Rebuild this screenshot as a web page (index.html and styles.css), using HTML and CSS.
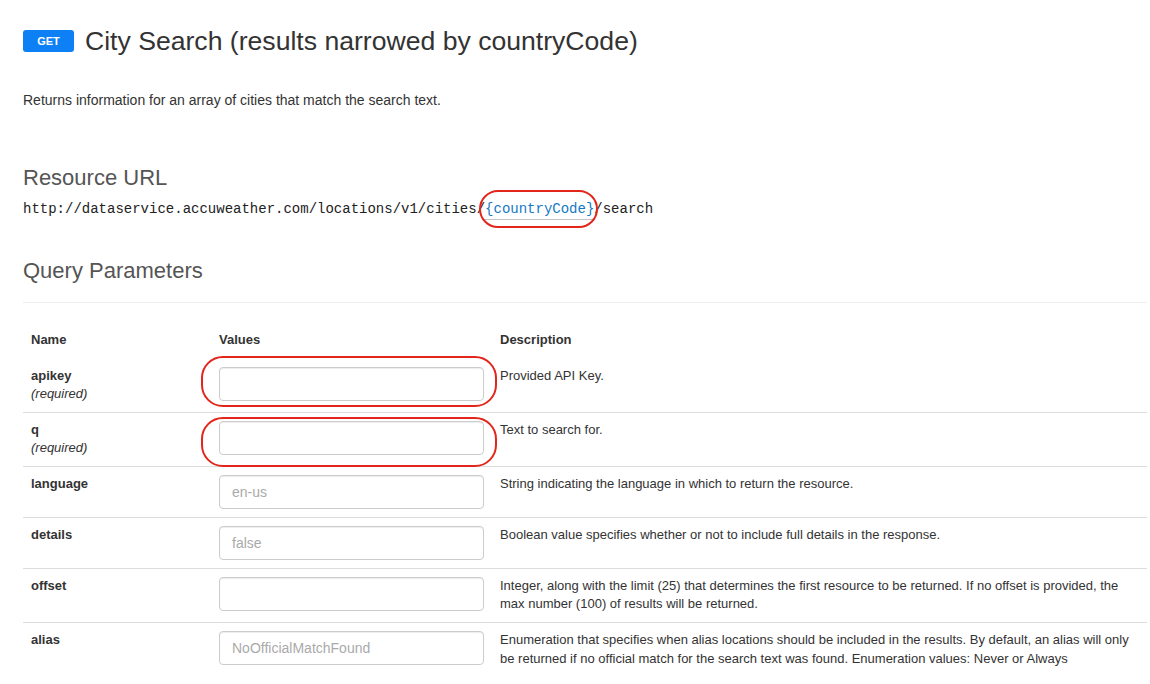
FILE: index.html
```html
<!DOCTYPE html>
<html lang="en">
<head>
<meta charset="utf-8">
<title>City Search</title>
<link rel="stylesheet" href="styles.css">
</head>
<body>
<div class="page">
  <div class="endpoint-head">
    <span class="method">GET</span>
    <h1 class="endpoint-title">City Search (results narrowed by countryCode)</h1>
  </div>
  <p class="endpoint-desc">Returns information for an array of cities that match the search text.</p>

  <h3 class="section-title">Resource URL</h3>
  <div class="resource-url">http://dataservice.accuweather.com/locations/v1/cities/<span class="url-param">{countryCode}<span class="mark mark-url"></span></span>/search</div>

  <h3 class="section-title section-title-query">Query Parameters</h3>
  <hr class="divider">

  <table class="params">
    <colgroup>
      <col class="col-name">
      <col class="col-value">
      <col class="col-desc">
    </colgroup>
    <thead>
      <tr><th>Name</th><th>Values</th><th>Description</th></tr>
    </thead>
    <tbody>
      <tr class="first-row">
        <td><div class="pname">apikey</div><div class="req">(required)</div></td>
        <td><div class="field"><input class="input" type="text"><span class="mark mark-a"></span></div></td>
        <td>Provided API Key.</td>
      </tr>
      <tr>
        <td><div class="pname">q</div><div class="req">(required)</div></td>
        <td><div class="field"><input class="input" type="text"><span class="mark mark-b"></span></div></td>
        <td>Text to search for.</td>
      </tr>
      <tr>
        <td><div class="pname">language</div></td>
        <td><div class="field"><input class="input" type="text" placeholder="en-us"></div></td>
        <td>String indicating the language in which to return the resource.</td>
      </tr>
      <tr>
        <td><div class="pname">details</div></td>
        <td><div class="field"><input class="input" type="text" placeholder="false"></div></td>
        <td>Boolean value specifies whether or not to include full details in the response.</td>
      </tr>
      <tr>
        <td><div class="pname">offset</div></td>
        <td><div class="field"><input class="input" type="text"></div></td>
        <td>Integer, along with the limit (25) that determines the first resource to be returned. If no offset is provided, the max number (100) of results will be returned.</td>
      </tr>
      <tr>
        <td><div class="pname">alias</div></td>
        <td><div class="field"><input class="input" type="text" placeholder="NoOfficialMatchFound"></div></td>
        <td>Enumeration that specifies when alias locations should be included in the results. By default, an alias will only be returned if no official match for the search text was found. Enumeration values: Never or Always</td>
      </tr>
    </tbody>
  </table>
</div>
</body>
</html>
```

FILE: styles.css
```css
html, body {
  margin: 0;
  padding: 0;
  background: #fff;
}
body {
  font-family: "Liberation Sans", Arial, Helvetica, sans-serif;
  font-size: 13px;
  line-height: 1.42857;
  color: #333;
}
.page {
  width: 1124px;
  padding: 23px 3px 0 23px;
}
.endpoint-head {
  display: flex;
  align-items: center;
  gap: 11px;
  height: 36px;
}
.method {
  display: inline-flex;
  align-items: center;
  justify-content: center;
  width: 51px;
  height: 22px;
  border-radius: 3px;
  background: #0c80f4;
  color: #fff;
  font-size: 11px;
  font-weight: bold;
  line-height: 1;
}
.endpoint-title {
  margin: 0;
  font-size: 26.6px;
  font-weight: normal;
  line-height: 36px;
  color: #333;
}
.endpoint-desc {
  margin: 31px 0 0;
  font-size: 14px;
  line-height: 20px;
}
.section-title {
  margin: 56px 0 0;
  font-size: 22px;
  font-weight: normal;
  line-height: 24px;
  color: #555;
}
.section-title-query {
  margin-top: 40px;
}
.resource-url {
  margin-top: 9px;
  font-family: "Liberation Mono", "Courier New", monospace;
  font-size: 14px;
  line-height: 20px;
  color: #222;
}
.url-param {
  position: relative;
  color: #1479c4;
  border-bottom: 1px solid #c4c4c4;
  padding-bottom: 2px;
}
.mark {
  position: absolute;
  border: 2px solid #e2261c;
  border-radius: 22px;
  pointer-events: none;
}
.mark-url {
  left: -6px;
  right: -4px;
  top: -11px;
  bottom: -9px;
  border-radius: 20px;
}
.divider {
  margin: 19px 0 20px;
  border: 0;
  border-top: 1px solid #eee;
}
.params {
  width: 100%;
  border-collapse: collapse;
  table-layout: fixed;
}
.col-name { width: 188px; }
.col-value { width: 281px; }
.params th {
  text-align: left;
  font-weight: bold;
  padding: 8px;
  vertical-align: top;
}
.params td {
  padding: 8px;
  vertical-align: top;
  border-top: 1px solid #ddd;
}
.params .first-row td {
  border-top-color: transparent;
}
.pname {
  font-weight: bold;
}
.req {
  font-style: italic;
}
.field {
  position: relative;
}
.input {
  display: block;
  box-sizing: border-box;
  width: 100%;
  height: 34px;
  margin: 0;
  padding: 6px 12px;
  border: 1px solid #ccc;
  border-radius: 4px;
  box-shadow: inset 0 1px 1px rgba(0, 0, 0, 0.075);
  font-family: "Liberation Sans", Arial, Helvetica, sans-serif;
  font-size: 14px;
  color: #555;
  background: #fff;
}
.input::placeholder {
  color: #aaa;
}
.mark-a {
  left: -18px;
  right: -13px;
  top: -11px;
  bottom: -6px;
}
.mark-b {
  left: -18px;
  right: -13px;
  top: -4px;
  bottom: -12px;
}
```
